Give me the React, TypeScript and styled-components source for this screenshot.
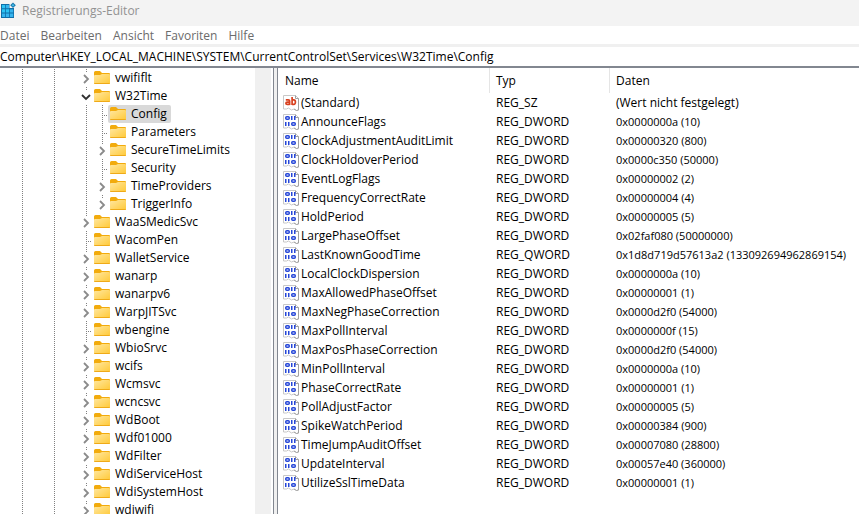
import React from "react";
import styled, { createGlobalStyle, css } from "styled-components";

const GlobalStyle = createGlobalStyle`
  *, *::before, *::after { box-sizing: border-box; }
  html, body, #root { height: 100%; }
  body {
    margin: 0;
    overflow: hidden;
    background: #fff;
    color: #000;
    font: 12px/18px "Open Sans", "Noto Sans", sans-serif;
  }
  button, input { font: inherit; color: inherit; border: 0; padding: 0; margin: 0; background: none; }
`;

const Window = styled.div`
  display: flex;
  flex-direction: column;
  height: 100vh;
`;

const TitleBar = styled.header`
  display: flex;
  flex: none;
  align-items: center;
  gap: 6px;
  height: 26px;
  padding-bottom: 4px;
  background: #f3f3f3;
  color: #929292;
`;

const Title = styled.h1`
  margin: 0;
  font-size: 12px;
  line-height: 18px;
  font-weight: 400;
`;

const MenuBar = styled.nav`
  display: flex;
  flex: none;
  align-items: flex-start;
  gap: 11px;
  height: 18px;
  color: #6b6b6b;
`;

const MenuItem = styled.button`
  height: 20px;
  line-height: 20px;
`;

const AddressBar = styled.div`
  flex: none;
  height: 24px;
  border-top: 3px solid #f0f0f0;
  border-bottom: 2px solid #828790;
`;

const AddressInput = styled.input`
  display: block;
  width: 100%;
  height: 19px;
  outline: 0;
`;

const Body = styled.main`
  display: flex;
  flex: 1;
  min-height: 0;
`;

const TreePane = styled.section`
  display: flex;
  flex: none;
  width: 274px;
  overflow: hidden;
  border-right: 1px solid #828790;
`;

const Tree = styled.ul`
  flex: 1;
  margin: 0;
  padding: 1px 0 0 14px;
  list-style: none;
`;

const ScrollTrack = styled.div`
  width: 16px;
  margin-right: 2px;
  background: #f0f0f0;
`;

const Splitter = styled.div`
  flex: none;
  width: 4px;
  background: #f0f0f0;
  border-right: 1px solid #828790;
`;

const TreeRow = styled.li`
  display: flex;
  height: 18px;
`;

const dots = "repeating-linear-gradient(to bottom, #808080 0 1px, transparent 1px 2px)";

const Guide = styled.span<{ $line: boolean }>`
  flex: none;
  width: 16px;
  background: ${(p) => (p.$line ? dots : "none")} 8px 0 / 1px 100% no-repeat;
`;

type Kind = "open" | "closed" | "leaf";

const Joint = styled.span<{ $kind: Kind }>`
  display: flex;
  flex: none;
  justify-content: flex-start;
  width: 14px;
  ${(p) =>
    p.$kind === "leaf"
      ? css`
          background:
            ${dots} 8px 0 / 1px 100% no-repeat,
            repeating-linear-gradient(to right, #808080 0 1px, transparent 1px 2px) 8px 10px / 8px 1px no-repeat;
        `
      : css`
          background: ${dots} 8px 0 / 1px 3px no-repeat;
        `}
`;

const Toggle = styled.button`
  display: block;
  width: 14px;
  height: 18px;
`;

const KeyLabel = styled.button<{ $selected: boolean }>`
  display: flex;
  align-items: center;
  gap: 5px;
  height: 18px;
  padding: 0 4px 0 2px;
  white-space: nowrap;
  border-radius: 2px;
  background: ${(p) => (p.$selected ? "#d9d9d9" : "none")};
`;

const ListPane = styled.section`
  flex: 1;
  min-width: 0;
  overflow: hidden;
`;

const ValueTable = styled.table`
  width: 100%;
  table-layout: fixed;
  border-collapse: separate;
  border-spacing: 0;
`;

const NameCol = styled.col`
  width: 212px;
`;

const TypeCol = styled.col`
  width: 120px;
`;

const HeadCell = styled.th`
  height: 25px;
  padding: 0 0 0 6px;
  text-align: left;
  font-weight: 400;
  border-right: 1px solid #e5e5e5;
  &:first-child { padding-left: 7px; }
  &:last-child { border-right: 0; }
`;

const Cell = styled.td<{ $numeric?: boolean }>`
  height: 19px;
  padding: 0 0 0 6px;
  white-space: nowrap;
  font-size: ${(p) => (p.$numeric ? "11px" : "12px")};
`;

const NameCell = styled.div`
  display: flex;
  align-items: center;
  gap: 2px;
  margin-left: -1px;
`;

const Icon = styled.svg`
  display: block;
  flex: none;
`;

function AppIcon() {
  return (
    <Icon width="16" height="18" viewBox="0 2 16 18" aria-hidden="true">
      <path d="M1 4h8.500v4H14v10H1z" fill="#0f6ea8" />
      <path d="M2 5h3.200v3.300H2zM2 9.200h3.200v3.300H2zM6 9.200h3.200v3.300H6z" fill="#2cc3f3" />
      <path d="M6 5h3v3.300H6zM2 13.400h3.200V17H2zM6 13.400h3.200V17H6zM10 9.200h3.200v3.300H10zM10 13.400h3.200V17H10z" fill="#35b4ee" />
      <path d="M13 2.500l2.800 2.800L13 8.100l-2.800-2.800z" fill="#1b79ad" />
      <path d="M13 4l1.300 1.300L13 6.600l-1.300-1.300z" fill="#46c4f2" />
    </Icon>
  );
}

function FolderIcon() {
  return (
    <Icon width="16" height="16" viewBox="0 0 16 16" aria-hidden="true">
      <defs>
        <linearGradient id="folder" x1="0" y1="0" x2="1" y2="1">
          <stop offset="0" stopColor="#ffe79f" />
          <stop offset="1" stopColor="#ffc937" />
        </linearGradient>
      </defs>
      <path d="M0 2.500Q0 1 1.500 1H6L8 3h7q1 0 1 1v5H0z" fill="#f2ab0c" />
      <path d="M0 6Q0 5 1 5h5l2-1h7q1 0 1 1v8q0 1-1 1H1q-1 0-1-1z" fill="url(#folder)" />
      <path d="M0 13h16q0 1-1 1H1q-1 0-1-1z" fill="#efaa18" />
    </Icon>
  );
}

function Chevron({ open }: { open: boolean }) {
  return (
    <Icon width="14" height="18" viewBox="0 0 14 18" fill="none" aria-hidden="true">
      {open ? (
        <path d="M4 8l4 4 4-4" stroke="#303030" strokeWidth="1.8" />
      ) : (
        <path d="M6 6l4 4-4 4" stroke="#8a8a8a" strokeWidth="1.8" />
      )}
    </Icon>
  );
}

function ValueIcon({ text }: { text: boolean }) {
  return (
    <Icon width="16" height="16" viewBox="0 0 16 16" fill="none" aria-hidden="true">
      <path d="M.500 14V.500H12.500L15.500 3.500V15l-2 .500-2.500-1.500-2.500 1-3-2-2 1z" fill="#fff" stroke="#c8c8c8" />
      <path d="M12.500.500v3h3V15l-2 .500-2.500-1.500" stroke="#a0a0a0" />
      {text ? (
        <g stroke="#d8401f" strokeWidth="1.700">
          <path d="M2.800 4.800h2.400q1.400 0 1.400 1.300V10M6.600 7.200H4.200q-1.300 0-1.300 1.100t1.300 1.100h2.400" />
          <path d="M9.100 2v8M9.100 4.900h1.600q1.700 0 1.700 2.200t-1.700 2.200H9.100" />
        </g>
      ) : (
        <g stroke="#2546d8" strokeWidth="1.500">
          <rect x="2.750" y="2.750" width="3.500" height="2.500" rx="1" />
          <path d="M8.750 2v4M11.750 2v4M2.750 8v4M5.750 8v4" />
          <rect x="8.750" y="8.750" width="3.500" height="2.500" rx="1" />
        </g>
      )}
    </Icon>
  );
}

type Node = { name: string; kind?: Kind; child?: boolean };

const nodes: Node[] = [
  { name: "vwififlt" },
  { name: "W32Time", kind: "open" },
  { name: "Config", kind: "leaf", child: true },
  { name: "Parameters", kind: "leaf", child: true },
  { name: "SecureTimeLimits", child: true },
  { name: "Security", kind: "leaf", child: true },
  { name: "TimeProviders", child: true },
  { name: "TriggerInfo", child: true },
  { name: "WaaSMedicSvc" },
  { name: "WacomPen", kind: "leaf" },
  { name: "WalletService" },
  { name: "wanarp" },
  { name: "wanarpv6" },
  { name: "WarpJITSvc" },
  { name: "wbengine", kind: "leaf" },
  { name: "WbioSrvc" },
  { name: "wcifs" },
  { name: "Wcmsvc" },
  { name: "wcncsvc" },
  { name: "WdBoot" },
  { name: "Wdf01000" },
  { name: "WdFilter" },
  { name: "WdiServiceHost" },
  { name: "WdiSystemHost" },
  { name: "wdiwifi" },
];

const values: [string, string, string][] = [
  ["(Standard)", "REG_SZ", "(Wert nicht festgelegt)"],
  ["AnnounceFlags", "REG_DWORD", "0x0000000a (10)"],
  ["ClockAdjustmentAuditLimit", "REG_DWORD", "0x00000320 (800)"],
  ["ClockHoldoverPeriod", "REG_DWORD", "0x0000c350 (50000)"],
  ["EventLogFlags", "REG_DWORD", "0x00000002 (2)"],
  ["FrequencyCorrectRate", "REG_DWORD", "0x00000004 (4)"],
  ["HoldPeriod", "REG_DWORD", "0x00000005 (5)"],
  ["LargePhaseOffset", "REG_DWORD", "0x02faf080 (50000000)"],
  ["LastKnownGoodTime", "REG_QWORD", "0x1d8d719d57613a2 (133092694962869154)"],
  ["LocalClockDispersion", "REG_DWORD", "0x0000000a (10)"],
  ["MaxAllowedPhaseOffset", "REG_DWORD", "0x00000001 (1)"],
  ["MaxNegPhaseCorrection", "REG_DWORD", "0x0000d2f0 (54000)"],
  ["MaxPollInterval", "REG_DWORD", "0x0000000f (15)"],
  ["MaxPosPhaseCorrection", "REG_DWORD", "0x0000d2f0 (54000)"],
  ["MinPollInterval", "REG_DWORD", "0x0000000a (10)"],
  ["PhaseCorrectRate", "REG_DWORD", "0x00000001 (1)"],
  ["PollAdjustFactor", "REG_DWORD", "0x00000005 (5)"],
  ["SpikeWatchPeriod", "REG_DWORD", "0x00000384 (900)"],
  ["TimeJumpAuditOffset", "REG_DWORD", "0x00007080 (28800)"],
  ["UpdateInterval", "REG_DWORD", "0x00057e40 (360000)"],
  ["UtilizeSslTimeData", "REG_DWORD", "0x00000001 (1)"],
];

export default function App() {
  return (
    <>
      <GlobalStyle />
      <Window>
        <TitleBar>
          <AppIcon />
          <Title>Registrierungs-Editor</Title>
        </TitleBar>
        <MenuBar>
          {["Datei", "Bearbeiten", "Ansicht", "Favoriten", "Hilfe"].map((m) => (
            <MenuItem key={m}>{m}</MenuItem>
          ))}
        </MenuBar>
        <AddressBar>
          <AddressInput
            aria-label="Adresse"
            defaultValue={"Computer\\HKEY_LOCAL_MACHINE\\SYSTEM\\CurrentControlSet\\Services\\W32Time\\Config"}
          />
        </AddressBar>
        <Body>
          <TreePane>
            <Tree>
              {nodes.map(({ name, kind = "closed", child = false }) => (
                <TreeRow key={name}>
                  <Guide $line />
                  <Guide $line={false} />
                  <Guide $line />
                  <Guide $line={false} />
                  {child && <Guide $line />}
                  <Joint $kind={kind}>
                    {kind !== "leaf" && (
                      <Toggle aria-label={name} aria-expanded={kind === "open"}>
                        <Chevron open={kind === "open"} />
                      </Toggle>
                    )}
                  </Joint>
                  <KeyLabel $selected={name === "Config"}>
                    <FolderIcon />
                    {name}
                  </KeyLabel>
                </TreeRow>
              ))}
            </Tree>
            <ScrollTrack />
          </TreePane>
          <Splitter />
          <ListPane>
            <ValueTable>
              <colgroup>
                <NameCol />
                <TypeCol />
                <col />
              </colgroup>
              <thead>
                <tr>
                  <HeadCell scope="col">Name</HeadCell>
                  <HeadCell scope="col">Typ</HeadCell>
                  <HeadCell scope="col">Daten</HeadCell>
                </tr>
              </thead>
              <tbody>
                {values.map(([name, type, data]) => (
                  <tr key={name}>
                    <Cell>
                      <NameCell>
                        <ValueIcon text={type === "REG_SZ"} />
                        {name}
                      </NameCell>
                    </Cell>
                    <Cell>{type}</Cell>
                    <Cell $numeric={type !== "REG_SZ"}>{data}</Cell>
                  </tr>
                ))}
              </tbody>
            </ValueTable>
          </ListPane>
        </Body>
      </Window>
    </>
  );
}
